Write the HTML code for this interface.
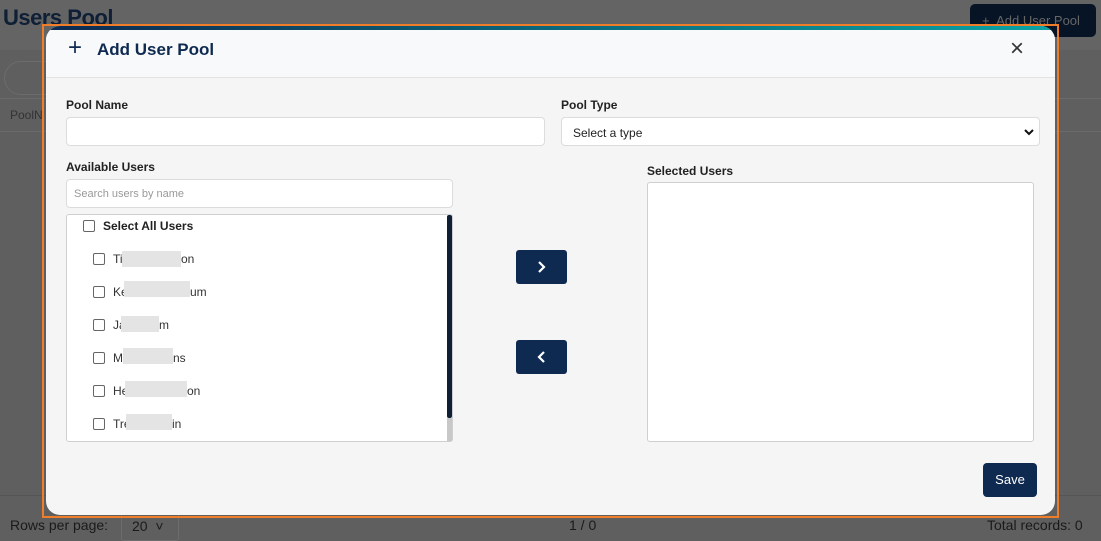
<!DOCTYPE html>
<html><head><style>
*{box-sizing:border-box;margin:0;padding:0}
body{width:1101px;height:541px;overflow:hidden;font-family:"Liberation Sans",sans-serif;background:#5f5f5f;position:relative;color:#222}
.abs{position:absolute}
.lbl{font-size:12px;font-weight:bold;color:#222}
.inp{background:#fff;border:1px solid #dcdcdc;border-radius:4px}
.cb{width:12px;height:12px;border:1.5px solid #666;border-radius:2px;background:#fff}
.blur{background:#e4e4e4;height:16px}
.name{font-size:12px;color:#333}
.btn{background:#0e2a50;border-radius:3px}
</style></head><body>
<div class="abs" style="left:0;top:0;width:1101px;height:50px;background:#646464"></div>
<div class="abs" style="left:3px;top:5px;font-size:22px;font-weight:bold;color:#0e1f36;letter-spacing:-0.5px">Users Pool</div>
<div class="abs" style="left:970px;top:4px;width:126px;height:33px;background:#061426;border-radius:5px;color:#666;font-size:13px;padding:9px 0 0 12px">+&nbsp; Add User Pool</div>
<div class="abs" style="left:4px;top:61px;width:60px;height:34px;border:1px solid #6c6c6c;border-radius:17px"></div>
<div class="abs" style="left:0;top:98px;width:1101px;height:1px;background:#6a6a6a"></div>
<div class="abs" style="left:10px;top:108px;font-size:12px;color:#333">PoolN</div>
<div class="abs" style="left:0;top:131px;width:1101px;height:1px;background:#6a6a6a"></div>
<div class="abs" style="left:0;top:495px;width:1101px;height:1px;background:#555"></div>
<div class="abs" style="left:10px;top:517px;font-size:14px;color:#1a1a1a">Rows per page:</div>
<div class="abs" style="left:121px;top:511px;width:58px;height:30px;border:1px solid #6c6c6c;border-radius:3px;font-size:14px;padding:6px 0 0 10px;color:#1a1a1a">20 &nbsp;&#709;</div>
<div class="abs" style="left:569px;top:517px;font-size:14px;color:#1a1a1a">1 / 0</div>
<div class="abs" style="left:987px;top:517px;font-size:14px;color:#1a1a1a">Total records: 0</div>

<div class="abs" style="left:42px;top:24px;width:1017px;height:494px;border:2px solid #f07d2a"></div>
<div class="abs" style="left:46px;top:26px;width:1009px;height:489px;background:#f5f5f5;border-radius:14px;overflow:hidden">
  <div style="height:4px;background:linear-gradient(90deg,#0e2a50,#0aa3a3)"></div>
  <div style="height:48px;background:#f8f9fa;border-bottom:1px solid #e2e2e2;position:relative">
    <div class="abs" style="left:22px;top:4px;font-size:24px;color:#0e2a50">+</div>
    <div class="abs" style="left:51px;top:10px;font-size:17px;font-weight:bold;color:#0e2a50">Add User Pool</div>
    <div class="abs" style="left:964px;top:5px;font-size:24px;color:#333">×</div>
  </div>
</div>
<div class="abs lbl" style="left:66px;top:98px">Pool Name</div>
<div class="abs inp" style="left:66px;top:117px;width:479px;height:29px"></div>
<div class="abs lbl" style="left:561px;top:98px">Pool Type</div>
<div class="abs inp" style="left:561px;top:117px;width:479px;height:29px;font-size:12px;padding:8px 0 0 11px;color:#222">Select a type<svg class="abs" style="right:5px;top:10px" width="10" height="8"><path d="M1 2l4 4 4-4" stroke="#111" stroke-width="2" fill="none"/></svg></div>
<div class="abs lbl" style="left:66px;top:160px">Available Users</div>
<div class="abs inp" style="left:66px;top:179px;width:387px;height:29px;font-size:11px;color:#999;padding:8px 0 0 7px">Search users by name</div>
<div class="abs" style="left:66px;top:214px;width:387px;height:228px;background:#fff;border:1px solid #cfcfcf;border-radius:3px"></div>
<div class="abs" style="left:447px;top:215px;width:5px;height:203px;background:#0e1f36;border-radius:2px"></div>
<div class="abs" style="left:447px;top:418px;width:5px;height:23px;background:#c8c8c8"></div>
<div class="abs cb" style="left:83px;top:220px"></div>
<div class="abs" style="left:103px;top:219px;font-size:12px;font-weight:bold">Select All Users</div>

<div class="abs cb" style="left:93px;top:253px"></div><div class="abs name" style="left:113px;top:252px">Ti</div><div class="abs blur" style="left:122px;top:251px;width:59px"></div><div class="abs name" style="left:181px;top:252px">on</div>
<div class="abs cb" style="left:93px;top:286px"></div><div class="abs name" style="left:113px;top:285px">Ke</div><div class="abs blur" style="left:124px;top:281px;width:66px"></div><div class="abs name" style="left:190px;top:285px">um</div>
<div class="abs cb" style="left:93px;top:319px"></div><div class="abs name" style="left:113px;top:318px">Ja</div><div class="abs blur" style="left:121px;top:316px;width:38px"></div><div class="abs name" style="left:159px;top:318px">m</div>
<div class="abs cb" style="left:93px;top:352px"></div><div class="abs name" style="left:113px;top:351px">M</div><div class="abs blur" style="left:123px;top:348px;width:50px"></div><div class="abs name" style="left:173px;top:351px">ns</div>
<div class="abs cb" style="left:93px;top:385px"></div><div class="abs name" style="left:113px;top:384px">He</div><div class="abs blur" style="left:125px;top:381px;width:62px"></div><div class="abs name" style="left:187px;top:384px">on</div>
<div class="abs cb" style="left:93px;top:418px"></div><div class="abs name" style="left:113px;top:417px">Tre</div><div class="abs blur" style="left:126px;top:414px;width:46px"></div><div class="abs name" style="left:172px;top:417px">in</div>

<div class="abs btn" style="left:516px;top:250px;width:51px;height:34px"><svg width="51" height="34"><path d="M23 12l5 5-5 5" stroke="#fff" stroke-width="2.2" fill="none"/></svg></div>
<div class="abs btn" style="left:516px;top:340px;width:51px;height:34px"><svg width="51" height="34"><path d="M28 12l-5 5 5 5" stroke="#fff" stroke-width="2.2" fill="none"/></svg></div>

<div class="abs lbl" style="left:647px;top:164px">Selected Users</div>
<div class="abs" style="left:647px;top:182px;width:387px;height:260px;background:#fff;border:1px solid #cfcfcf;border-radius:3px"></div>
<div class="abs btn" style="left:983px;top:463px;width:54px;height:34px;border-radius:4px;color:#fff;font-size:13px;text-align:center;line-height:34px">Save</div>
</body></html>
